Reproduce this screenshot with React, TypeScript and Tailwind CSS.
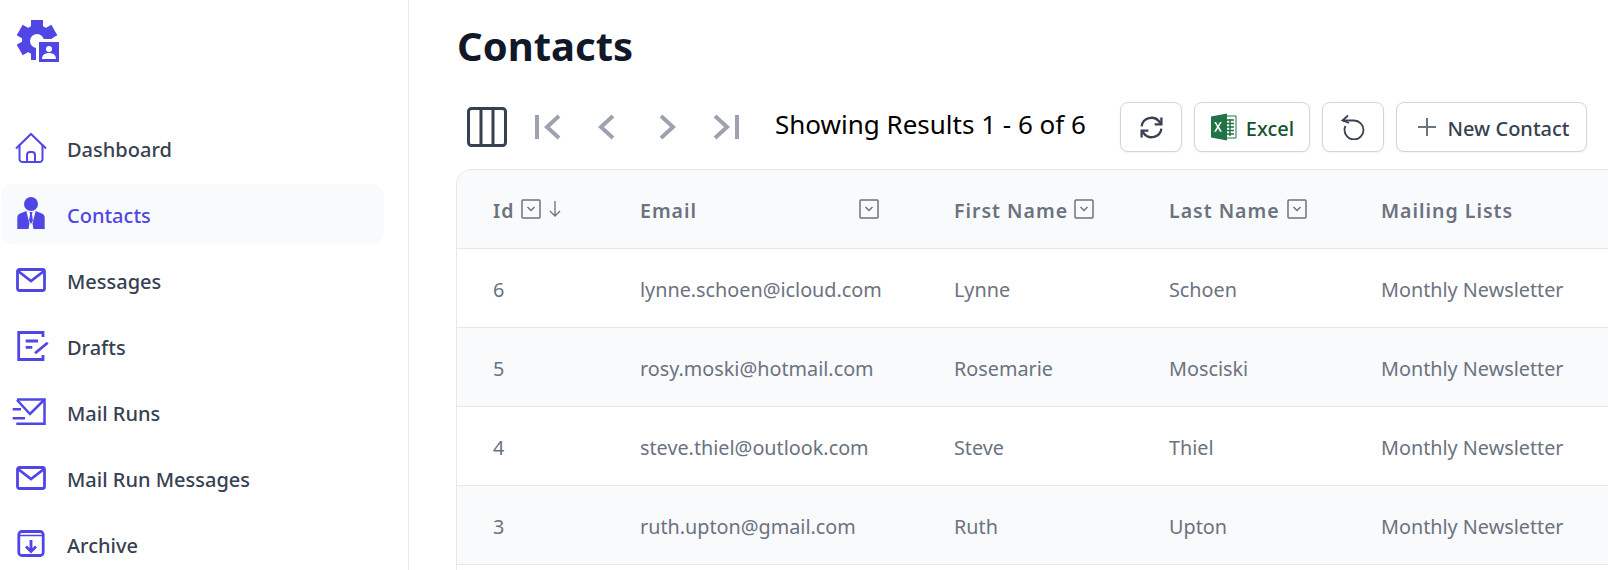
import type { ReactNode } from "react";

const iconBase = "h-[34px] w-[34px] overflow-visible fill-none stroke-[#4f46e5]";

function Logo() {
  return (
    <svg viewBox="0 0 44 44" className="h-[44px] w-[44px] fill-[#4f46e5]">
      <circle cx="21" cy="21" r="15" />
      <rect x="15" y="1" width="12" height="40" />
      <rect x="15" y="1" width="12" height="40" transform="rotate(60 21 21)" />
      <rect x="15" y="1" width="12" height="40" transform="rotate(120 21 21)" />
      <circle cx="21" cy="22" r="7" fill="#fff" />
      <rect x="20" y="20" width="24" height="24" fill="#fff" />
      <rect x="23" y="23" width="20" height="20" />
      <circle cx="33" cy="30" r="3" fill="#fff" />
      <path d="M26 40c0-4 3-6 7-6s7 2 7 6z" fill="#fff" />
    </svg>
  );
}

function HouseIcon() {
  return (
    <svg viewBox="0 0 34 34" className={`${iconBase} stroke-[2]`}>
      <path d="M1 17.500 16 3l15 14.500" />
      <path d="M4.500 13.500V28a3 3 0 0 0 3 3h17a3 3 0 0 0 3-3V13.500" />
      <path d="M12 31v-7a3 3 0 0 1 3-3h2a3 3 0 0 1 3 3v7" />
    </svg>
  );
}

function TieIcon() {
  return (
    <svg viewBox="0 0 34 34" className="h-[34px] w-[34px] fill-[#4f46e5]">
      <circle cx="16" cy="7" r="7" />
      <path d="M2.300 32V20.500c0-2.500 1.500-3.500 4-4.500l5-2 3.200 12.500-1 5.500z" />
      <path d="M29.700 32V20.500c0-2.500-1.500-3.500-4-4.500l-5-2-3.200 12.500 1 5.500z" />
      <path d="M14.500 15h3l-.6 2.500 1.100 6-2 3.500-2-3.500 1.100-6z" />
    </svg>
  );
}

function MailIcon() {
  return (
    <svg viewBox="0 0 34 34" className={`${iconBase} stroke-[2.800]`}>
      <rect x="2.500" y="6.500" width="27" height="21" rx="2" />
      <path d="m3 8 13 10L29 8" />
    </svg>
  );
}

function DraftIcon() {
  return (
    <svg viewBox="0 0 34 34" className={`${iconBase} stroke-[2.800]`}>
      <path d="M28 8V3.500H3.700v27H28V26" />
      <path d="M10.700 12H23M10.700 18.300h6.600" />
      <path d="m20 24.300 12.700-10.600" />
    </svg>
  );
}

function MailRunIcon() {
  return (
    <svg viewBox="0 0 34 34" className={`${iconBase} stroke-[2.500]`}>
      <path d="M2 4.500H29.500V28.800H1.300" />
      <path d="m2 5 13 14L29 5" />
      <path d="M-2.300 14.300H6M-2.300 23.300H10" />
    </svg>
  );
}

function ArchiveIcon() {
  return (
    <svg viewBox="0 0 34 34" className={`${iconBase} stroke-[2.800]`}>
      <rect x="3.800" y="4.500" width="24.400" height="24" rx="3" />
      <path d="M3.800 8.500h24.400" strokeWidth="1.500" />
      <path d="M16 13v11M11 19.500l5 5 5-5" />
    </svg>
  );
}

function ColumnsIcon() {
  return (
    <svg viewBox="0 0 40 40" className="h-[40px] w-[40px] fill-none stroke-[#374151] stroke-[3]">
      <rect x="1.500" y="1.500" width="37" height="37" rx="3" />
      <path d="M14 2v36M26 2v36" />
    </svg>
  );
}

function PagerIcon({ d }: { d: string }) {
  return (
    <svg viewBox="0 0 30 30" className="h-[30px] w-[30px] fill-none stroke-[#9ca3af] stroke-[4]">
      <path d={d} />
    </svg>
  );
}

function RefreshIcon() {
  return (
    <svg viewBox="0 0 24 24" className="h-[25px] w-[25px] fill-none stroke-[#374151] stroke-[2.200]">
      <path d="M2.500 11a9.500 9.500 0 0 1 17-4.500l1.500 2" />
      <path d="M21.500 2.500v6.500H15" />
      <path d="M21.500 13a9.500 9.500 0 0 1-17 4.500l-1.500-2" />
      <path d="M2.500 21.500V15H9" />
    </svg>
  );
}

function UndoIcon() {
  return (
    <svg viewBox="0 0 26 26" className="h-[26px] w-[26px] fill-none stroke-[#374151] stroke-[1.800]">
      <path d="M8 1.500 2.500 6.500 9 9" />
      <path d="M3 6.500h11a9.500 9.500 0 1 1-9.500 9.500c0-1.500.5-3 1-4" />
    </svg>
  );
}

function ExcelIcon() {
  return (
    <svg viewBox="0 0 28 28" className="h-[28px] w-[28px]">
      <path d="M15 3h11v22H15z" fill="#fff" stroke="#217346" strokeWidth="1" />
      <path d="M17 7h7M17 10.500h7M17 14h7M17 17.500h7M17 21h7M20 6v17" stroke="#217346" strokeWidth="1.500" fill="none" />
      <path d="M1 3.500 17 .5v27L1 24.500z" fill="#217346" />
      <path d="m6 9 2 3.500L10 9h1.800l-2.800 4.800 2.900 5H10l-2-3.600L6 18.800H4.100L7 13.800 4.200 9z" fill="#fff" />
    </svg>
  );
}

function PlusIcon() {
  return (
    <svg viewBox="0 0 20 20" className="h-[20px] w-[20px] fill-none stroke-[#6b7280] stroke-[2]">
      <path d="M10 1v18M1 10h18" />
    </svg>
  );
}

function FilterBox() {
  return (
    <svg viewBox="0 0 20 20" className="mb-[2px] h-[20px] w-[20px] shrink-0 fill-none stroke-[#6b7280] stroke-[1.500]">
      <rect x="1" y="1" width="18" height="18" rx="1" />
      <path d="m6.500 8 3.500 3.500L13.500 8" />
    </svg>
  );
}

function SortDown() {
  return (
    <svg viewBox="0 0 14 20" className="mb-[2px] h-[20px] w-[14px] fill-none stroke-[#6b7280] stroke-[1.300]">
      <path d="M7 2v15M2 12l5 5 5-5" />
    </svg>
  );
}

const nav: { label: string; icon: ReactNode; active?: boolean }[] = [
  { label: "Dashboard", icon: <HouseIcon /> },
  { label: "Contacts", icon: <TieIcon />, active: true },
  { label: "Messages", icon: <MailIcon /> },
  { label: "Drafts", icon: <DraftIcon /> },
  { label: "Mail Runs", icon: <MailRunIcon /> },
  { label: "Mail Run Messages", icon: <MailIcon /> },
  { label: "Archive", icon: <ArchiveIcon /> },
];

const contacts = [
  { id: 6, email: "lynne.schoen@icloud.com", first: "Lynne", last: "Schoen" },
  { id: 5, email: "rosy.moski@hotmail.com", first: "Rosemarie", last: "Mosciski" },
  { id: 4, email: "steve.thiel@outlook.com", first: "Steve", last: "Thiel" },
  { id: 3, email: "ruth.upton@gmail.com", first: "Ruth", last: "Upton" },
];

function Sidebar() {
  return (
    <aside className="h-[570px] w-[409px] shrink-0 overflow-hidden border-r border-[#e5e7eb] pl-[1px]">
      <div className="pt-[19px] pl-[15px]">
        <Logo />
      </div>
      <nav className="mt-[55px] flex w-[383px] flex-col gap-[6px]">
        {nav.map((item) => (
          <a
            key={item.label}
            className={`flex h-[60px] shrink-0 items-center rounded-xl pl-[14px] text-[20px] font-medium ${
              item.active ? "bg-[#f9fafb] text-[#4f46e5]" : "text-[#374151]"
            }`}
          >
            <span className="flex w-[52px] shrink-0 items-center">{item.icon}</span>
            <span className="pt-[4px]">{item.label}</span>
          </a>
        ))}
      </nav>
    </aside>
  );
}

function ToolButton({ children, className }: { children: ReactNode; className: string }) {
  return (
    <button className={`flex h-[50px] items-center justify-center rounded-lg border border-[#d1d5db] bg-white shadow-xs ${className}`}>
      {children}
    </button>
  );
}

function Toolbar() {
  return (
    <div className="mt-[28px] flex h-[50px] items-center">
      <div className="mr-[25px] ml-[11px] flex">
        <ColumnsIcon />
      </div>
      <div className="mr-[33px] flex items-center gap-[30px]">
        <PagerIcon d="M5 3v24M27 4 15 15l12 11" />
        <PagerIcon d="M21 4 9 15l12 11" />
        <PagerIcon d="m9 4 12 11L9 26" />
        <PagerIcon d="M25 3v24M3 4l12 11L3 26" />
      </div>
      <span className="pb-[5px] text-[26px] text-black">Showing Results 1 - 6 of 6</span>
      <div className="mr-[21px] ml-auto flex gap-[12px]">
        <ToolButton className="w-[62px]">
          <RefreshIcon />
        </ToolButton>
        <ToolButton className="w-[116px] gap-[8px] text-[20px] font-medium text-[#14532d]">
          <ExcelIcon />
          <span className="pt-[4px]">Excel</span>
        </ToolButton>
        <ToolButton className="w-[62px]">
          <UndoIcon />
        </ToolButton>
        <ToolButton className="w-[191px] gap-[11px] pl-[3px] text-[20px] font-medium text-[#374151]">
          <PlusIcon />
          <span className="pt-[4px]">New Contact</span>
        </ToolButton>
      </div>
    </div>
  );
}

function ContactsTable() {
  return (
    <div className="mt-[17px] w-[1200px] overflow-hidden rounded-tl-2xl border-t border-l border-[#e5e7eb]">
      <table className="w-full table-fixed border-collapse text-left">
        <thead className="bg-[#f9fafb] text-[19.500px] font-semibold tracking-[1px] text-[#6b7280]">
          <tr className="h-[78px] border-b border-[#e5e7eb]">
            <th className="w-[147px] pt-[3px] pl-[36px] font-semibold">
              <span className="flex items-center gap-[7px]">
                Id <FilterBox /> <SortDown />
              </span>
            </th>
            <th className="w-[314px] pt-[3px] pl-[36px] font-semibold">
              <span className="flex w-[239px] items-center justify-between">
                Email <FilterBox />
              </span>
            </th>
            <th className="w-[215px] pt-[3px] pl-[36px] font-semibold">
              <span className="flex items-center gap-[6px]">
                First Name <FilterBox />
              </span>
            </th>
            <th className="w-[212px] pt-[3px] pl-[36px] font-semibold">
              <span className="flex items-center gap-[7px]">
                Last Name <FilterBox />
              </span>
            </th>
            <th className="pt-[3px] pl-[36px] font-semibold">Mailing Lists</th>
          </tr>
        </thead>
        <tbody className="text-[19.800px] text-[#6b7280]">
          {contacts.map((c, i) => (
            <tr key={c.id} className={`h-[79px] border-b border-[#e5e7eb] ${i % 2 ? "bg-[#f9fafb]" : "bg-white"}`}>
              <td className="pt-[4px] pl-[36px]">{c.id}</td>
              <td className="pt-[4px] pl-[36px]">{c.email}</td>
              <td className="pt-[4px] pl-[36px]">{c.first}</td>
              <td className="pt-[4px] pl-[36px]">{c.last}</td>
              <td className="pt-[4px] pl-[36px]">Monthly Newsletter</td>
            </tr>
          ))}
          {/* next row starts right at the fold, its text is below the window */}
          <tr className="h-[79px] bg-white" />
        </tbody>
      </table>
    </div>
  );
}

export default function App() {
  return (
    <div className="flex h-[570px] w-[1608px] overflow-hidden bg-white font-['Noto_Sans',sans-serif]">
      <Sidebar />
      <main className="min-w-0 flex-1 pl-[47px]">
        <h1 className="mt-[18px] pl-[1px] text-[40px] leading-[56px] font-bold text-[#111827]">Contacts</h1>
        <Toolbar />
        <ContactsTable />
      </main>
    </div>
  );
}
